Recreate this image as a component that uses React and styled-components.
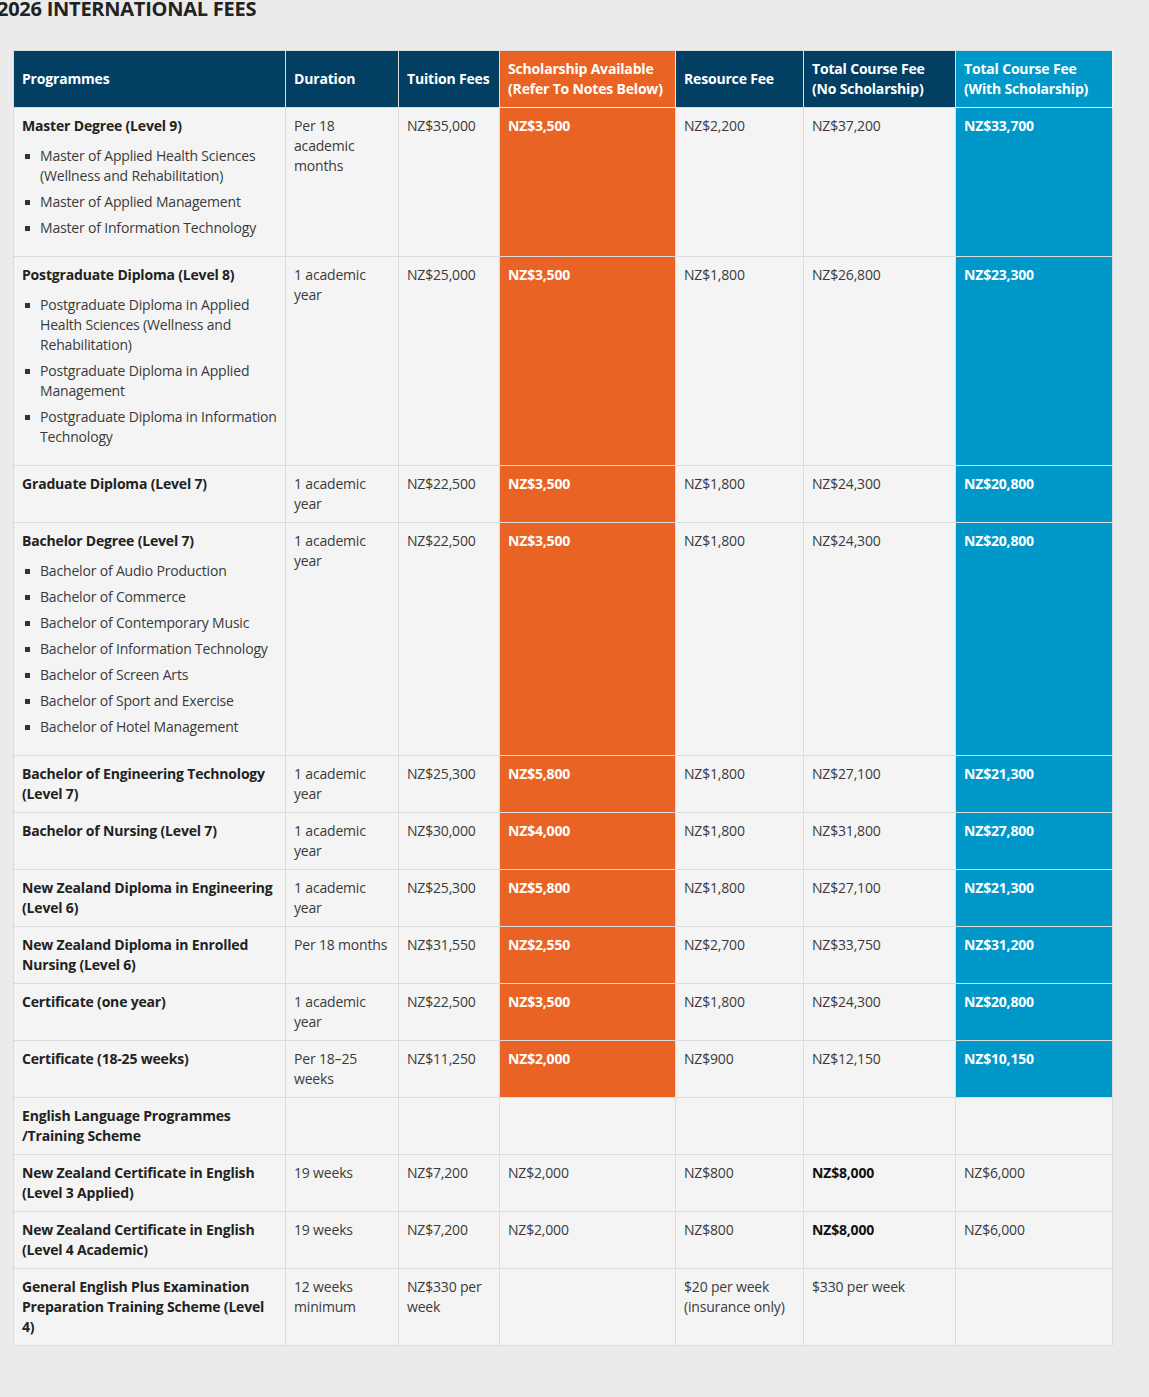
import React from "react";
import styled, { createGlobalStyle } from "styled-components";

const GlobalStyle = createGlobalStyle`
  html, body {
    margin: 0;
    padding: 0;
    background: #ebebeb;
  }
  body {
    font-family: "Open Sans", "Liberation Sans", sans-serif;
    color: #333;
  }
`;

const programmes = [
  {
    title: "Master Degree (Level 9)",
    items: [
      "Master of Applied Health Sciences (Wellness and Rehabilitation)",
      "Master of Applied Management",
      "Master of Information Technology",
    ],
    duration: "Per 18 academic months",
    tuition: "NZ$35,000",
    scholarship: "NZ$3,500",
    resource: "NZ$2,200",
    total: "NZ$37,200",
    totalWith: "NZ$33,700",
    highlight: true,
  },
  {
    title: "Postgraduate Diploma (Level 8)",
    items: [
      "Postgraduate Diploma in Applied Health Sciences (Wellness and Rehabilitation)",
      "Postgraduate Diploma in Applied Management",
      "Postgraduate Diploma in Information Technology",
    ],
    duration: "1 academic year",
    tuition: "NZ$25,000",
    scholarship: "NZ$3,500",
    resource: "NZ$1,800",
    total: "NZ$26,800",
    totalWith: "NZ$23,300",
    highlight: true,
  },
  {
    title: "Graduate Diploma (Level 7)",
    duration: "1 academic year",
    tuition: "NZ$22,500",
    scholarship: "NZ$3,500",
    resource: "NZ$1,800",
    total: "NZ$24,300",
    totalWith: "NZ$20,800",
    highlight: true,
  },
  {
    title: "Bachelor Degree (Level 7)",
    items: [
      "Bachelor of Audio Production",
      "Bachelor of Commerce",
      "Bachelor of Contemporary Music",
      "Bachelor of Information Technology",
      "Bachelor of Screen Arts",
      "Bachelor of Sport and Exercise",
      "Bachelor of Hotel Management",
    ],
    duration: "1 academic year",
    tuition: "NZ$22,500",
    scholarship: "NZ$3,500",
    resource: "NZ$1,800",
    total: "NZ$24,300",
    totalWith: "NZ$20,800",
    highlight: true,
  },
  {
    title: "Bachelor of Engineering Technology (Level 7)",
    duration: "1 academic year",
    tuition: "NZ$25,300",
    scholarship: "NZ$5,800",
    resource: "NZ$1,800",
    total: "NZ$27,100",
    totalWith: "NZ$21,300",
    highlight: true,
  },
  {
    title: "Bachelor of Nursing (Level 7)",
    duration: "1 academic year",
    tuition: "NZ$30,000",
    scholarship: "NZ$4,000",
    resource: "NZ$1,800",
    total: "NZ$31,800",
    totalWith: "NZ$27,800",
    highlight: true,
  },
  {
    title: "New Zealand Diploma in Engineering (Level 6)",
    duration: "1 academic year",
    tuition: "NZ$25,300",
    scholarship: "NZ$5,800",
    resource: "NZ$1,800",
    total: "NZ$27,100",
    totalWith: "NZ$21,300",
    highlight: true,
  },
  {
    title: "New Zealand Diploma in Enrolled Nursing (Level 6)",
    duration: "Per 18 months",
    tuition: "NZ$31,550",
    scholarship: "NZ$2,550",
    resource: "NZ$2,700",
    total: "NZ$33,750",
    totalWith: "NZ$31,200",
    highlight: true,
  },
  {
    title: "Certificate (one year)",
    duration: "1 academic year",
    tuition: "NZ$22,500",
    scholarship: "NZ$3,500",
    resource: "NZ$1,800",
    total: "NZ$24,300",
    totalWith: "NZ$20,800",
    highlight: true,
  },
  {
    title: "Certificate (18-25 weeks)",
    duration: "Per 18–25 weeks",
    tuition: "NZ$11,250",
    scholarship: "NZ$2,000",
    resource: "NZ$900",
    total: "NZ$12,150",
    totalWith: "NZ$10,150",
    highlight: true,
  },
  {
    title: "English Language Programmes /Training Scheme",
  },
  {
    title: "New Zealand Certificate in English (Level 3 Applied)",
    duration: "19 weeks",
    tuition: "NZ$7,200",
    scholarship: "NZ$2,000",
    resource: "NZ$800",
    total: "NZ$8,000",
    totalWith: "NZ$6,000",
    boldTotal: true,
  },
  {
    title: "New Zealand Certificate in English (Level 4 Academic)",
    duration: "19 weeks",
    tuition: "NZ$7,200",
    scholarship: "NZ$2,000",
    resource: "NZ$800",
    total: "NZ$8,000",
    totalWith: "NZ$6,000",
    boldTotal: true,
  },
  {
    title: "General English Plus Examination Preparation Training Scheme (Level 4)",
    duration: "12 weeks minimum",
    tuition: "NZ$330 per week",
    resource: "$20 per week (insurance only)",
    total: "$330 per week",
  },
];

const Page = styled.div`
  padding: 0 0 51px 13px;
`;

const Title = styled.h2`
  margin: -4px 0 28px -16px;
  font-size: 20px;
  line-height: 26px;
  font-weight: 700;
  letter-spacing: -0.25px;
  color: #222;
  text-transform: uppercase;
`;

const Table = styled.table`
  width: 1099px;
  table-layout: fixed;
  border-collapse: collapse;
  border: 1px solid #dcdcdc;
  font-size: 14px;
  line-height: 20px;
  letter-spacing: -0.18px;
`;

const Head = styled.th`
  padding: 8px;
  text-align: left;
  vertical-align: middle;
  font-weight: 700;
  color: #fff;
  background: ${(p) => p.$bg || "#023f63"};
  border: 1px solid ${(p) => (p.$bg ? "#f2f2f2" : "#dcdcdc")};
  border-top-color: #dcdcdc;
`;

const Cell = styled.td`
  padding: 8px;
  vertical-align: top;
  text-align: left;
  background: ${(p) => p.$bg || "#f4f4f4"};
  color: ${(p) => (p.$bg ? "#fff" : p.$strong ? "#111" : "#3a3a3a")};
  font-weight: ${(p) => (p.$bg || p.$strong ? 700 : 400)};
  border: 1px solid #dcdcdc;
`;

const ProgTitle = styled.div`
  font-weight: 700;
  color: #222;
`;

const List = styled.ul`
  margin: 10px 0;
  padding: 0 0 0 18px;
  list-style: none;
`;

const Item = styled.li`
  position: relative;
  color: #3a3a3a;

  & + & {
    margin-top: 6px;
  }

  &::before {
    content: "";
    position: absolute;
    left: -15px;
    top: 8px;
    width: 5px;
    height: 5px;
    background: #333;
  }
`;

const ORANGE = "#e96424";
const BLUE = "#0097c9";

const App = () => {
  return (
    <Page>
      <GlobalStyle />
      <Title>2026 International Fees</Title>
      <Table>
        <colgroup>
          <col style={{ width: 272 }} />
          <col style={{ width: 113 }} />
          <col style={{ width: 101 }} />
          <col style={{ width: 176 }} />
          <col style={{ width: 128 }} />
          <col style={{ width: 152 }} />
          <col style={{ width: 157 }} />
        </colgroup>
        <thead>
          <tr>
            <Head>Programmes</Head>
            <Head>Duration</Head>
            <Head>Tuition Fees</Head>
            <Head $bg={ORANGE}>
              Scholarship Available (Refer To Notes Below)
            </Head>
            <Head>Resource Fee</Head>
            <Head>
              Total Course Fee
              <br />
              (No Scholarship)
            </Head>
            <Head $bg={BLUE}>
              Total Course Fee
              <br />
              (With Scholarship)
            </Head>
          </tr>
        </thead>
        <tbody>
          {programmes.map((row, i) => (
            <tr key={i}>
              <Cell>
                <ProgTitle>{row.title}</ProgTitle>
                {row.items && (
                  <List>
                    {row.items.map((item) => (
                      <Item key={item}>{item}</Item>
                    ))}
                  </List>
                )}
              </Cell>
              <Cell>{row.duration}</Cell>
              <Cell>{row.tuition}</Cell>
              <Cell $bg={row.highlight ? ORANGE : undefined}>
                {row.scholarship}
              </Cell>
              <Cell>{row.resource}</Cell>
              <Cell $strong={row.boldTotal}>{row.total}</Cell>
              <Cell $bg={row.highlight ? BLUE : undefined}>{row.totalWith}</Cell>
            </tr>
          ))}
        </tbody>
      </Table>
    </Page>
  );
};

export default App;
